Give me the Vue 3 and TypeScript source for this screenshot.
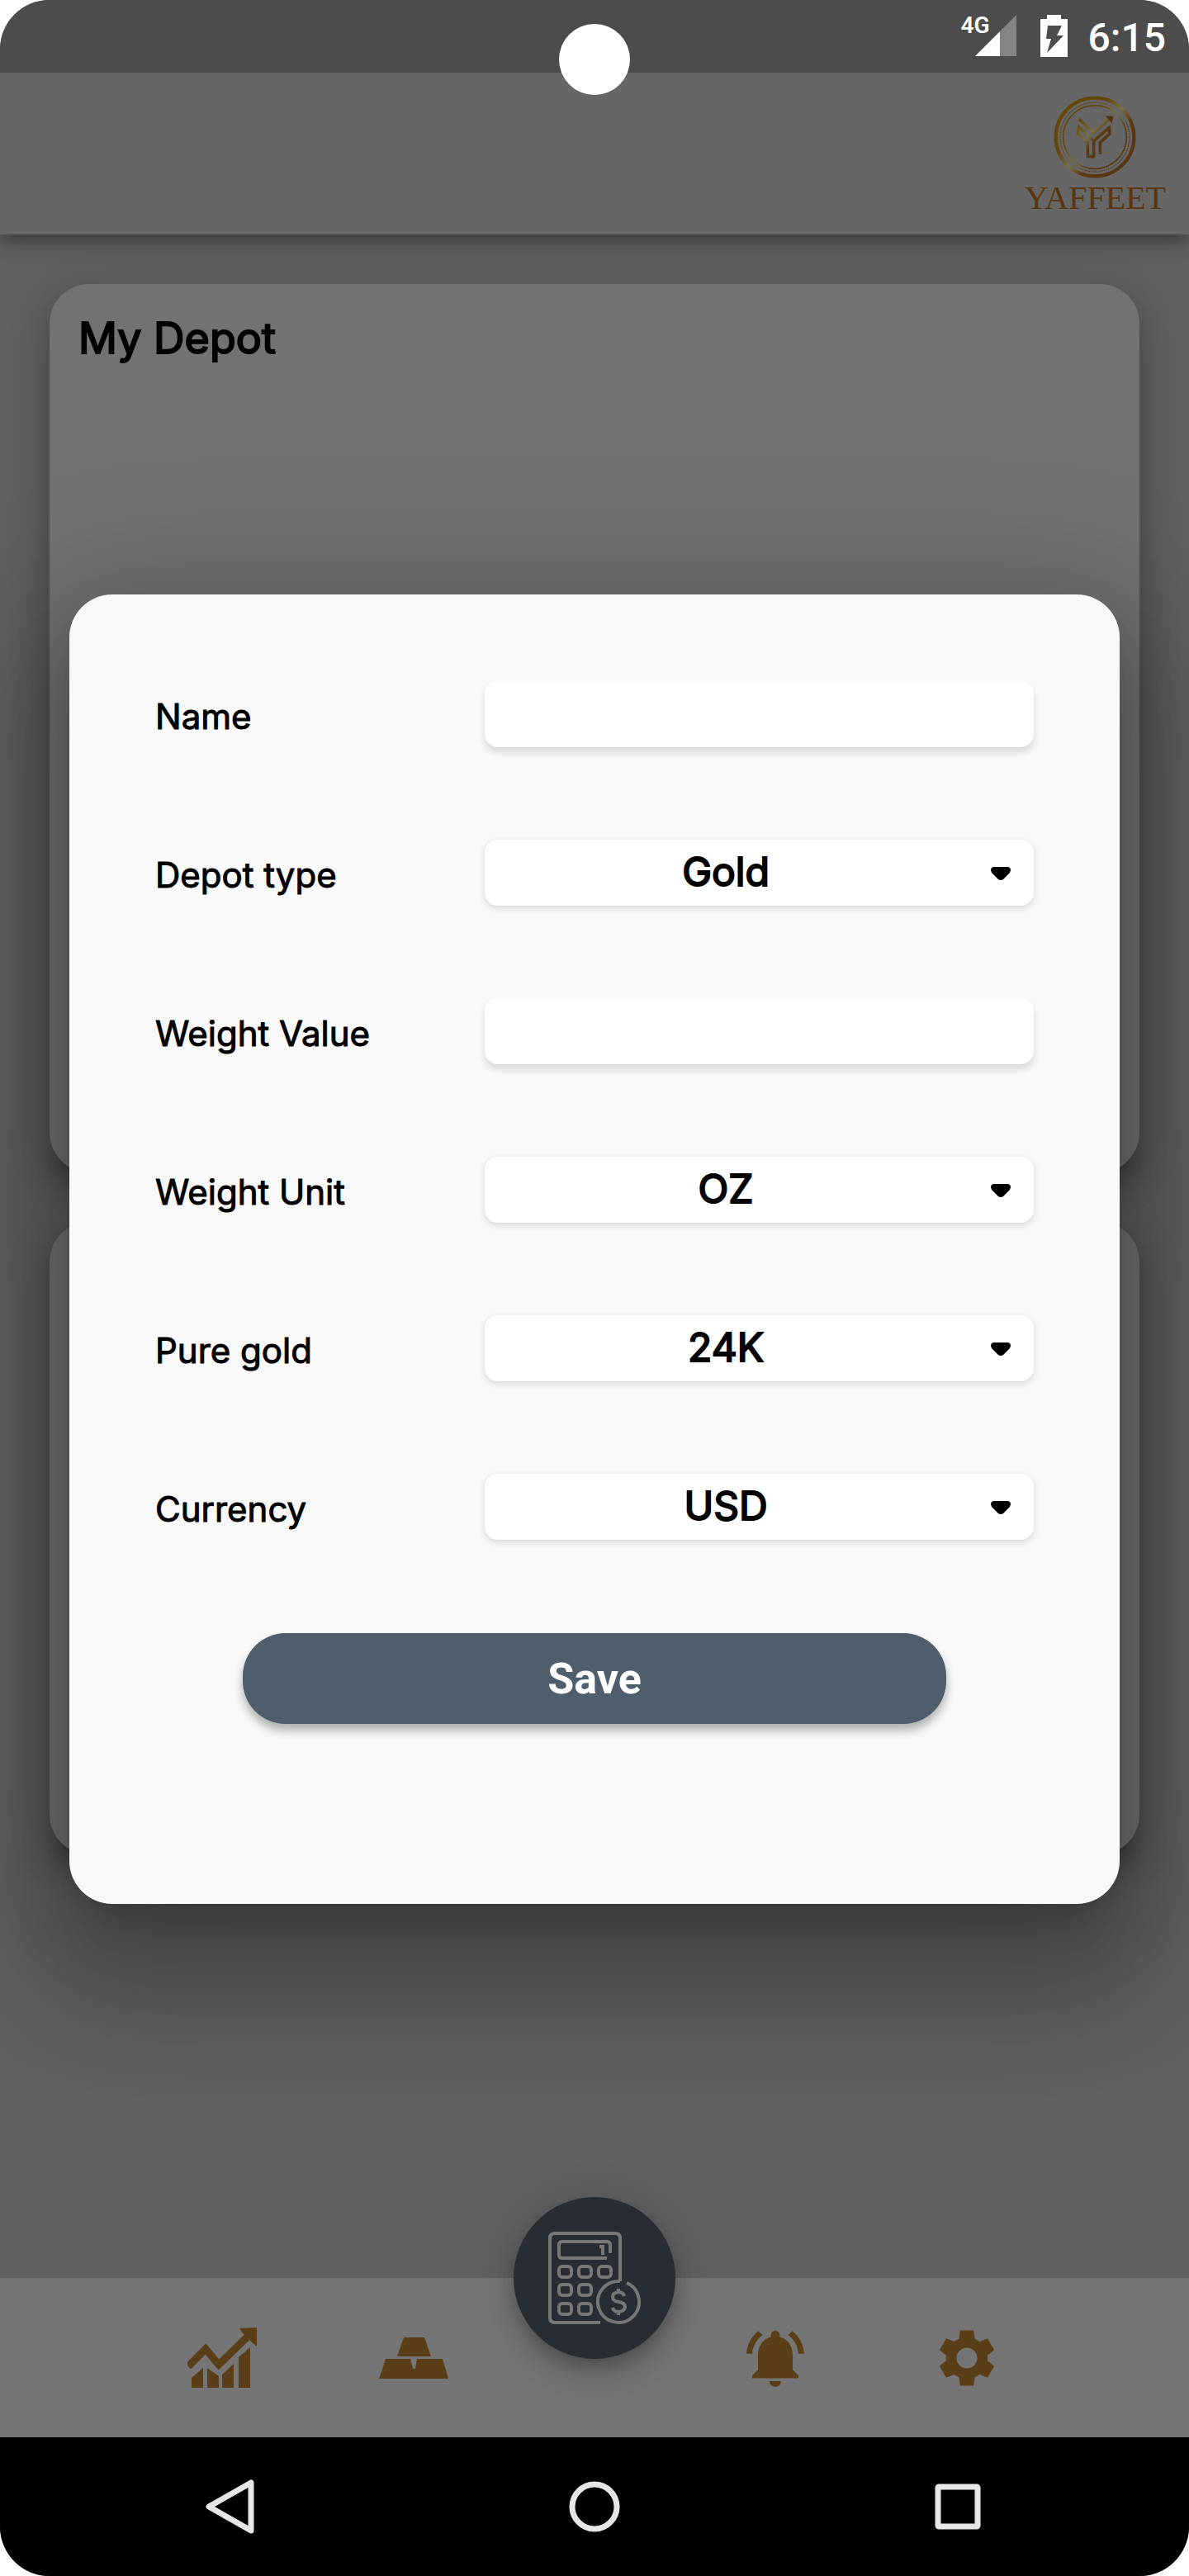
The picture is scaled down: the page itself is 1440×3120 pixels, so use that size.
<script setup lang="ts">
import { reactive } from 'vue'

interface Field {
  id: string
  label: string
  options?: string[]
}

const fields: Field[] = [
  { id: 'name', label: 'Name' },
  { id: 'depotType', label: 'Depot type', options: ['Gold', 'Silver'] },
  { id: 'weightValue', label: 'Weight Value' },
  { id: 'weightUnit', label: 'Weight Unit', options: ['OZ', 'Gram', 'KG'] },
  { id: 'purity', label: 'Pure gold', options: ['24K', '22K', '21K', '18K'] },
  { id: 'currency', label: 'Currency', options: ['USD', 'EUR'] },
]

const form = reactive<Record<string, string>>({
  name: '',
  depotType: 'Gold',
  weightValue: '',
  weightUnit: 'OZ',
  purity: '24K',
  currency: 'USD',
})

const keys = [
  [13, 42], [37, 42], [61, 42],
  [13, 64], [37, 64],
  [13, 87], [37, 87],
]
</script>

<template>
  <div class="screen">
    <div class="status">
      <span class="network">4G</span>
      <svg class="signal" viewBox="0 0 50 50" aria-hidden="true">
        <path d="M50 0V50H30V20Z" fill="#848484" />
        <path d="M0 50L30 20V50Z" fill="#fff" />
      </svg>
      <svg class="battery" viewBox="0 0 33 51" aria-hidden="true">
        <path d="M8 0H25V5H33V51H0V5H8Z" fill="#fff" />
        <path d="M9 13H26L20 25H28L8 46L13 29H7Z" fill="#4c4c4c" />
      </svg>
      <span class="clock">6:15</span>
      <span class="camera"></span>
    </div>

    <header class="appbar">
      <div class="brand">
        <svg class="emblem" viewBox="410 348 300 300" aria-hidden="true">
          <defs>
            <linearGradient id="gold" gradientUnits="userSpaceOnUse" x1="450" y1="390" x2="680" y2="600">
              <stop offset="0" stop-color="#624706" />
              <stop offset="0.3" stop-color="#62450a" />
              <stop offset="0.5" stop-color="#77704a" />
              <stop offset="0.68" stop-color="#5a3a12" />
              <stop offset="1" stop-color="#573610" />
            </linearGradient>
            <linearGradient id="goldMark" gradientUnits="userSpaceOnUse" x1="500" y1="440" x2="610" y2="540">
              <stop offset="0" stop-color="#624706" />
              <stop offset="0.42" stop-color="#77704a" />
              <stop offset="0.62" stop-color="#5a3a12" />
              <stop offset="1" stop-color="#573610" />
            </linearGradient>
          </defs>
          <g fill="none" stroke="url(#gold)">
            <circle cx="560" cy="498" r="142" stroke-width="13" />
            <circle cx="560" cy="498" r="126" stroke-width="4" stroke-dasharray="5 3" />
            <circle cx="560" cy="498" r="115" stroke-width="5" />
          </g>
          <g fill="none" stroke="url(#goldMark)" stroke-width="11">
            <path d="M503 433L556 484L612 432" />
            <path d="M556 572V512L502 462L498 486L534 518V568L558 570" />
            <path d="M556 512L612 464L614 486L579 518V560" />
          </g>
          <path d="M598 421L628 422L621 450L614 438L606 430Z" fill="#573610" />
        </svg>
        <span class="wordmark">YAFFEET</span>
      </div>
    </header>

    <main class="content">
      <section class="card card-depot">
        <h1>My Depot</h1>
      </section>
      <section class="card card-list"></section>
    </main>

    <nav class="tabs">
      <button type="button" class="tab" aria-label="Charts">
        <svg viewBox="0 0 84 84" fill="#5a3e17">
          <path d="M5 66L19 54V78H5ZM24 54L38 64V78H24ZM42 62L56 49V78H42ZM62 41L76 29V78H62Z" />
          <path d="M1 52L22 31L38 50L75 14" fill="none" stroke="#5a3e17" stroke-width="9" />
          <path d="M63 6L84 5V28L77 22L67 12Z" />
        </svg>
      </button>
      <button type="button" class="tab" aria-label="Depot">
        <svg viewBox="0 0 84 84" fill="#5a3e17">
          <path d="M30 17H55L63 40H22ZM8 43H38L41 55H44L46 43H77L84 67H0Z" />
        </svg>
      </button>
      <span class="tab-space"></span>
      <button type="button" class="tab" aria-label="Alerts">
        <svg viewBox="0 0 24 24" fill="#5a3e17">
          <path d="M7.58 4.08L6.15 2.65C3.75 4.48 2.17 7.3 2.03 10.5h2c.15-2.65 1.51-4.97 3.55-6.42zm12.39 6.42h2c-.15-3.2-1.73-6.02-4.12-7.85l-1.42 1.43c2.02 1.45 3.39 3.77 3.54 6.42zM18 11c0-3.07-1.64-5.64-4.5-6.32V4c0-.83-.67-1.5-1.5-1.5s-1.5.67-1.5 1.5v.68C7.63 5.36 6 7.92 6 11v5l-2 2v1h16v-1l-2-2v-5zm-6 11c.14 0 .27-.01.4-.04.65-.14 1.18-.58 1.44-1.18.1-.24.15-.5.15-.78h-4c.01 1.1.9 2 2.01 2z" />
        </svg>
      </button>
      <button type="button" class="tab" aria-label="Settings">
        <svg viewBox="0 0 24 24" fill="#5a3e17">
          <path d="M19.14 12.94c.04-.3.06-.61.06-.94 0-.32-.02-.64-.07-.94l2.03-1.58c.18-.14.23-.41.12-.61l-1.92-3.32c-.12-.22-.37-.29-.59-.22l-2.39.96c-.5-.38-1.03-.7-1.62-.94l-.36-2.54c-.04-.24-.24-.41-.48-.41h-3.84c-.24 0-.43.17-.47.41l-.36 2.54c-.59.24-1.13.57-1.62.94l-2.39-.96c-.22-.08-.47 0-.59.22L2.74 8.87c-.12.21-.08.47.12.61l2.03 1.58c-.05.3-.09.63-.09.94s.02.64.07.94l-2.03 1.58c-.18.14-.23.41-.12.61l1.92 3.32c.12.22.37.29.59.22l2.39-.96c.5.38 1.03.7 1.62.94l.36 2.54c.05.24.24.41.48.41h3.84c.24 0 .44-.17.47-.41l.36-2.54c.59-.24 1.13-.56 1.62-.94l2.39.96c.22.08.47 0 .59-.22l1.92-3.32c.12-.22.07-.47-.12-.61l-2.01-1.58zM12 15.6c-1.98 0-3.6-1.62-3.6-3.6s1.62-3.6 3.6-3.6 3.6 1.62 3.6 3.6-1.62 3.6-3.6 3.6z" />
        </svg>
      </button>
      <button type="button" class="fab" aria-label="Calculator">
        <svg viewBox="0 0 112 112" fill="none" stroke="#777777" stroke-width="4">
          <path d="M87 60V8Q87 2 81 2H8Q2 2 2 8V104Q2 110 8 110H63" />
          <path d="M75 26V16Q75 12 71 12H17Q13 12 13 16V28Q13 32 17 32H71" />
          <path d="M62 18H66V28" />
          <rect v-for="([x, y], i) in keys" :key="i" :x="x" :y="y" width="15" height="13" rx="4" />
          <path d="M87 60A25 25 0 1 0 95 62" />
          <path d="M85 69V73M85 97V101M92 78Q91 73 85 73Q78 74 78 79Q78 84 85 85Q93 86 93 91Q92 97 85 97Q79 97 78 92" />
        </svg>
      </button>
    </nav>

    <div class="system">
      <button type="button" class="sys" aria-label="Back">
        <svg viewBox="0 0 70 70"><path d="M59 6V64L8 35Z" /></svg>
      </button>
      <button type="button" class="sys" aria-label="Home">
        <svg viewBox="0 0 70 70"><circle cx="35" cy="35" r="27" /></svg>
      </button>
      <button type="button" class="sys" aria-label="Recent apps">
        <svg viewBox="0 0 70 70"><rect x="11" y="11" width="48" height="48" rx="1" /></svg>
      </button>
    </div>

    <div class="overlay">
      <form class="dialog" role="dialog" aria-label="Depot entry" @submit.prevent>
        <div class="fields">
          <div v-for="field in fields" :key="field.id" class="row">
            <label :for="field.id">{{ field.label }}</label>
            <div v-if="field.options" class="picker">
              <select :id="field.id" v-model="form[field.id]">
                <option v-for="option in field.options" :key="option">{{ option }}</option>
              </select>
              <svg class="caret" viewBox="0 0 24 16" aria-hidden="true">
                <path d="M3 0H21Q24 1 24 4L23 7L15 15Q12 17 9 15L1 7L0 4Q0 1 3 0Z" />
              </svg>
            </div>
            <input v-else :id="field.id" v-model="form[field.id]" type="text" />
          </div>
        </div>
        <button type="submit" class="save">Save</button>
      </form>
    </div>
  </div>
</template>

<style>
body {
  background: #ffffff;
}
</style>

<style scoped>
* {
  box-sizing: border-box;
}

button {
  border: 0;
  padding: 0;
  background: none;
  font: inherit;
}

svg {
  display: block;
}

.screen {
  position: relative;
  display: flex;
  flex-direction: column;
  min-height: 100vh;
  overflow: hidden;
  border-radius: 60px;
  background: #606060;
  color: #000000;
  font-family: Inter, sans-serif;
}

.status {
  position: relative;
  z-index: 2;
  display: flex;
  justify-content: flex-end;
  height: 88px;
  padding: 18px 28px 0 0;
  background: #4c4c4c;
  color: #ffffff;
  font-family: Roboto, sans-serif;
}

.network {
  margin-right: -18px;
  font-size: 28px;
  font-weight: 600;
  line-height: 26px;
}

.signal {
  width: 50px;
  height: 50px;
  margin-right: 29px;
}

.battery {
  width: 33px;
  height: 51px;
  margin-right: 25px;
}

.clock {
  font-size: 48px;
  font-weight: 500;
  line-height: 56px;
}

.camera {
  position: absolute;
  top: 29px;
  left: 50%;
  width: 86px;
  height: 86px;
  margin-left: -43px;
  border-radius: 50%;
  background: #ffffff;
}

.appbar {
  position: relative;
  z-index: 1;
  display: flex;
  justify-content: flex-end;
  height: 196px;
  padding: 28px 28px 0;
  background: #666666;
  box-shadow: 0 7px 14px -4px rgba(0, 0, 0, 0.2), 0 14px 18px rgba(0, 0, 0, 0.14), 0 4px 35px rgba(0, 0, 0, 0.12);
}

.brand {
  display: flex;
  flex-direction: column;
  align-items: center;
}

.emblem {
  width: 100px;
  height: 100px;
}

.wordmark {
  color: #573610;
  font-family: "Liberation Serif", serif;
  font-size: 40px;
  line-height: 48px;
}

.content {
  flex: 1;
  display: flex;
  flex-direction: column;
  gap: 60px;
  padding: 60px;
}

.card {
  border-radius: 48px;
  background: #727272;
  box-shadow: 0 18px 18px -10px rgba(0, 0, 0, 0.2), 0 28px 35px 4px rgba(0, 0, 0, 0.14), 0 10px 49px 7px rgba(0, 0, 0, 0.12);
}

.card-depot {
  min-height: 1076px;
  padding: 32px 35px;
}

.card-list {
  min-height: 766px;
}

h1 {
  margin: 0;
  font-size: 52px;
  font-weight: 400;
  line-height: 68px;
  -webkit-text-stroke: 2px #000000;
}

.tabs {
  position: relative;
  display: flex;
  justify-content: center;
  align-items: center;
  gap: 148px;
  height: 193px;
  background: #757575;
}

.tab,
.tab svg {
  width: 84px;
  height: 84px;
}

.tab-space {
  width: 58px;
}

.fab {
  position: absolute;
  top: -98px;
  left: 50%;
  display: flex;
  align-items: center;
  justify-content: center;
  width: 196px;
  height: 196px;
  margin-left: -98px;
  border-radius: 50%;
  background: #272d33;
  box-shadow: 0 10px 18px -4px rgba(0, 0, 0, 0.2), 0 20px 35px rgba(0, 0, 0, 0.14), 0 4px 56px rgba(0, 0, 0, 0.12);
}

.fab svg {
  width: 112px;
  height: 112px;
}

.system {
  display: flex;
  justify-content: center;
  align-items: center;
  gap: 370px;
  height: 168px;
  background: #000000;
}

.sys svg {
  width: 70px;
  height: 70px;
  fill: none;
  stroke: #e6e6e6;
  stroke-width: 7;
  stroke-linejoin: round;
}

.overlay {
  position: absolute;
  inset: 0;
  z-index: 3;
  display: flex;
  align-items: center;
  padding: 88px 84px 182px;
}

.dialog {
  flex: 1;
  padding: 105px 104px 218px;
  border-radius: 52px;
  background: #f9f9f9;
  box-shadow: 0 32px 48px -24px rgba(0, 0, 0, 0.25), 0 80px 120px 40px rgba(0, 0, 0, 0.18), 0 32px 160px 50px rgba(0, 0, 0, 0.14);
}

.fields {
  display: grid;
  gap: 112px;
}

.row {
  display: grid;
  grid-template-columns: 3fr 5fr;
  height: 80px;
}

label {
  padding-top: 3px;
  font-size: 42px;
  font-weight: 400;
  line-height: 80px;
  -webkit-text-stroke: 1px #000000;
}

input,
select {
  width: 100%;
  height: 80px;
  border: 0;
  border-radius: 16px;
  background: #ffffff;
  color: #000000;
  font-family: Inter, sans-serif;
  font-size: 48px;
  font-weight: 400;
  -webkit-text-stroke: 2px #000000;
}

input {
  padding: 0 28px;
  box-shadow: 0 6px 10px rgba(0, 0, 0, 0.14);
}

select {
  appearance: none;
  padding: 0 81px 4px 0;
  text-align: center;
  text-align-last: center;
  box-shadow: 0 3px 10px rgba(0, 0, 0, 0.14);
}

.picker {
  position: relative;
}

.caret {
  position: absolute;
  top: 33px;
  right: 28px;
  width: 24px;
  height: 16px;
  pointer-events: none;
}

.save {
  display: block;
  width: 80%;
  height: 110px;
  margin: 113px auto 0;
  border-radius: 52px;
  background: #4f5e6d;
  box-shadow: 0 8px 12px rgba(0, 0, 0, 0.3);
  color: #ffffff;
  font-family: Roboto, sans-serif;
  font-size: 52px;
  font-weight: 700;
}
</style>
